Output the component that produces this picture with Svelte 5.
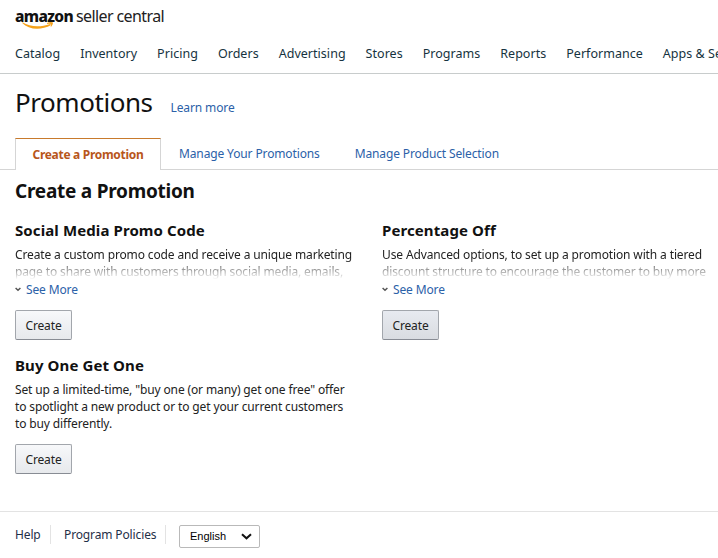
<script lang="ts">
    interface Promo {
        title: string;
        lines: string[];
        collapsed: boolean;
        hovered?: boolean;
    }

    const navItems = [
        'Catalog',
        'Inventory',
        'Pricing',
        'Orders',
        'Advertising',
        'Stores',
        'Programs',
        'Reports',
        'Performance',
        'Apps & Se',
    ];

    const tabs = ['Create a Promotion', 'Manage Your Promotions', 'Manage Product Selection'];

    const promos: Promo[] = [
        {
            title: 'Social Media Promo Code',
            lines: [
                'Create a custom promo code and receive a unique marketing',
                'page to share with customers through social media, emails,',
            ],
            collapsed: true,
        },
        {
            title: 'Percentage Off',
            lines: [
                'Use Advanced options, to set up a promotion with a tiered',
                'discount structure to encourage the customer to buy more',
            ],
            collapsed: true,
            hovered: true,
        },
        {
            title: 'Buy One Get One',
            lines: [
                'Set up a limited-time, "buy one (or many) get one free" offer',
                'to spotlight a new product or to get your current customers',
                'to buy differently.',
            ],
            collapsed: false,
        },
    ];

    let activeTab = $state(0);
</script>

<div class="page">
    <header>
        <div class="logo">
            <span class="brand">amazon</span>
            <span class="product">seller central</span>
            <svg class="smile" width="32" height="8" viewBox="0 0 32 8">
                <path d="M0.5 0.3C8 4.8 18 5.6 28 1.9L29.2 3C19 8.6 7 7.9 0.2 1Z" fill="#f5a21b" />
                <path d="M25 0.9C27.5 -0.2 30.2 0 30.9 0.6C31.2 1.6 30.2 4 28.6 5.2C28.9 3.8 29.3 2.8 28.9 2.2C28.3 1.7 27 1.7 25 1.9Z" fill="#f5a21b" />
            </svg>
        </div>
        <nav>
            {#each navItems as item}
                <span>{item}</span>
            {/each}
        </nav>
    </header>

    <main>
        <div class="heading">
            <h1>Promotions</h1>
            <a href="#learn">Learn more</a>
        </div>

        <div class="tabs" role="tablist">
            {#each tabs as tab, i}
                <button
                    class="tab"
                    class:active={i === activeTab}
                    role="tab"
                    aria-selected={i === activeTab}
                    onclick={() => (activeTab = i)}
                >
                    {tab}
                </button>
            {/each}
        </div>

        <h2>Create a Promotion</h2>

        <div class="promos">
            {#each promos as promo}
                <section>
                    <h3>{promo.title}</h3>
                    <div class="description" class:faded={promo.collapsed}>
                        {#each promo.lines as line}
                            <p>{line}</p>
                        {/each}
                    </div>
                    {#if promo.collapsed}
                        <a class="see-more" href="#more">
                            <svg width="6" height="5" viewBox="0 0 6 5">
                                <path d="M0.6 1L3 3.3L5.4 1" fill="none" stroke="#555" stroke-width="1.5" />
                            </svg>
                            <span>See More</span>
                        </a>
                    {/if}
                    <button class="create" class:hovered={promo.hovered}>Create</button>
                </section>
            {/each}
        </div>
    </main>

    <footer>
        <span class="help">Help</span>
        <span class="policies">Program Policies</span>
        <div class="language">
            <span>English</span>
            <svg width="11" height="7" viewBox="0 0 11 7">
                <path d="M1 1.2L5.5 5.3L10 1.2" fill="none" stroke="#111" stroke-width="2" />
            </svg>
        </div>
    </footer>
</div>

<style>
    :global(body) {
        margin: 0;
        background: #fff;
    }
    .page {
        height: 558px;
        overflow: hidden;
        display: flex;
        flex-direction: column;
        font: 12px/17px 'Noto Sans', 'Open Sans', sans-serif;
        letter-spacing: -0.13px;
        color: #111;
    }
    .page * {
        box-sizing: border-box;
    }
    h1,
    h2,
    h3,
    p {
        margin: 0;
    }
    a {
        color: #2b61a8;
        text-decoration: none;
    }
    button {
        font: inherit;
        letter-spacing: inherit;
        cursor: pointer;
    }
    header {
        height: 74px;
        flex: none;
        border-bottom: 1px solid #c8cccc;
        padding: 6px 0 0 15px;
    }
    .logo {
        position: relative;
        height: 24px;
        display: flex;
        gap: 4px;
        line-height: 21px;
        white-space: nowrap;
    }
    .brand {
        width: 57px;
        font-size: 15.5px;
        font-weight: 800;
        letter-spacing: -0.65px;
    }
    .product {
        font-size: 16px;
        letter-spacing: -0.6px;
        color: #222;
    }
    .smile {
        position: absolute;
        left: 7px;
        top: 16px;
    }
    nav {
        display: flex;
        gap: 20px;
        margin-top: 15px;
        white-space: nowrap;
        font-size: 12.5px;
        letter-spacing: 0.03px;
        color: #163340;
    }
    main {
        height: 437px;
        flex: none;
    }
    .heading {
        display: flex;
        align-items: baseline;
        gap: 18px;
        height: 64px;
        padding: 11px 0 0 15px;
    }
    h1 {
        font-size: 26px;
        line-height: 34px;
        font-weight: 400;
        letter-spacing: -0.45px;
    }
    .tabs {
        display: flex;
        height: 32px;
        padding-left: 15px;
        border-bottom: 1px solid #d5d5d5;
    }
    .tab {
        height: 32px;
        padding: 0 17px 1px 18px;
        border: 0;
        background: none;
        color: #2b61a8;
        white-space: nowrap;
    }
    .tab.active {
        width: 146px;
        padding: 0 0 1px;
        border: 1px solid #d5d5d5;
        border-top: 1px solid #c87a2c;
        border-bottom: 0;
        background: #fff;
        color: #b8561b;
        font-weight: 700;
        letter-spacing: -0.3px;
    }
    h2 {
        margin: 8px 0 0 15px;
        font-size: 19px;
        line-height: 26px;
        font-weight: 700;
        letter-spacing: -0.25px;
    }
    .promos {
        display: grid;
        grid-template-columns: 367px 1fr;
        grid-template-rows: 135px auto;
        padding: 16px 0 0 15px;
    }
    h3 {
        font-size: 15px;
        line-height: 20px;
        font-weight: 700;
        letter-spacing: 0.1px;
        margin-bottom: 6px;
    }
    .description {
        color: #222;
        white-space: nowrap;
    }
    .faded {
        height: 34px;
        overflow: hidden;
        mask-image: linear-gradient(#000 35%, transparent 98%);
    }
    .see-more {
        display: flex;
        align-items: center;
        gap: 5px;
        margin-top: 1px;
    }
    .create {
        display: block;
        width: 57px;
        height: 30px;
        margin-top: 12px;
        padding: 0;
        border: 1px solid #a2a6ac;
        border-bottom-color: #888c94;
        border-radius: 2px;
        background: linear-gradient(#f7f8fa, #e7e9ec);
        color: #222;
    }
    .create.hovered {
        background: linear-gradient(#e7eaf0, #d9dce1);
    }
    footer {
        flex: 1;
        display: flex;
        align-items: flex-start;
        border-top: 1px solid #e3e3e3;
        padding: 13px 0 0 15px;
        color: #1f2f48;
        white-space: nowrap;
    }
    .help,
    .policies {
        height: 19px;
        line-height: 20px;
        border-right: 1px solid #e3e3e3;
    }
    .help {
        width: 36px;
    }
    .policies {
        width: 115px;
        padding-left: 13px;
    }
    .language {
        display: flex;
        align-items: center;
        justify-content: space-between;
        width: 81px;
        height: 23px;
        margin-left: 13px;
        padding: 0 7px 0 10px;
        border: 1px solid #b9b9b9;
        border-radius: 2px;
        font: 11px/21px 'Liberation Sans', Arial, sans-serif;
        letter-spacing: 0;
        color: #000;
    }
</style>
